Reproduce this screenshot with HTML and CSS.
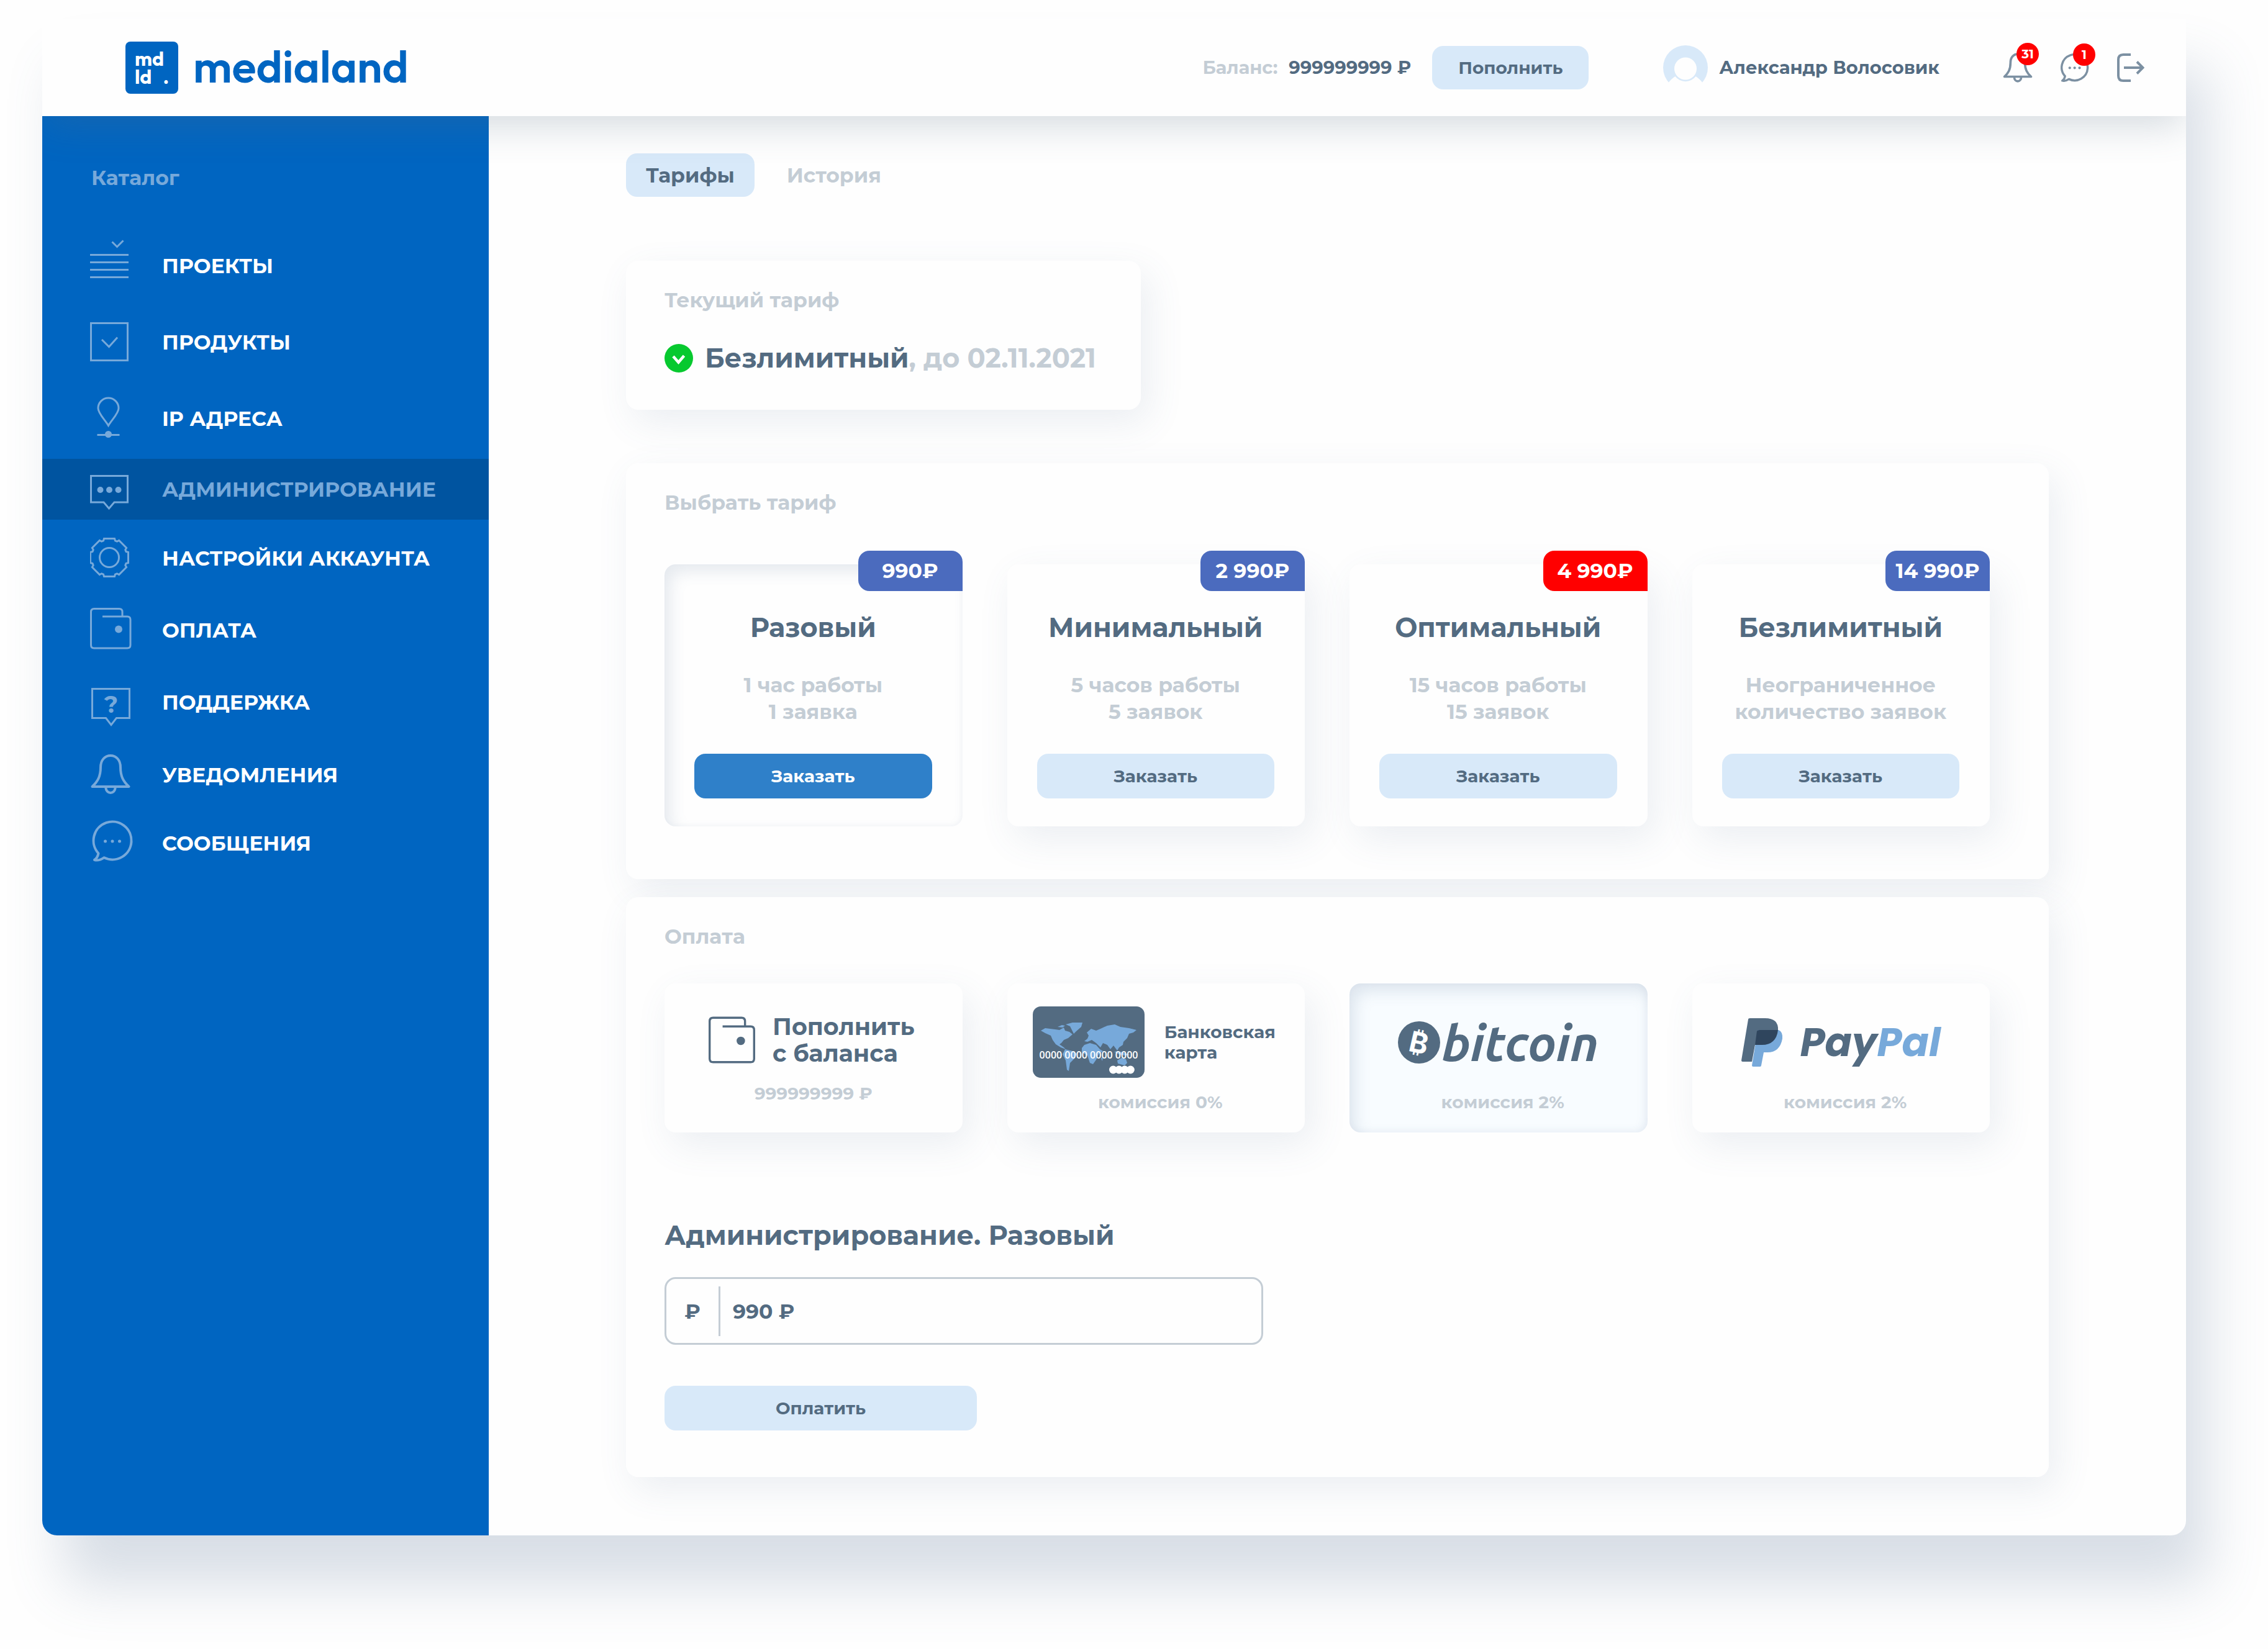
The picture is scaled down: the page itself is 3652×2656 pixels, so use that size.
FILE: index.html
```html
<!DOCTYPE html>
<html lang="ru">
<head>
<meta charset="utf-8">
<meta name="viewport" content="width=device-width, initial-scale=1">
<title>medialand — Тарифы</title>
<link rel="stylesheet" href="styles.css">
</head>
<body>
<div class="window">
  <header class="header">
    <a class="logo" href="#">
      <span class="logo__mark"><span class="logo__line">md</span><span class="logo__line"><span>ld</span><span>.</span></span></span>
      <span class="logo__name">medialand</span>
    </a>
    <div class="balance">
      <span class="balance__label">Баланс:</span>
      <span class="balance__sum">999999999 ₽</span>
      <button class="button button--small" type="button">Пополнить</button>
    </div>
    <a class="user" href="#">
      <svg class="user__avatar" viewBox="0 0 72 72" aria-hidden="true">
        <circle cx="36" cy="36" r="36" fill="#d8e9f9"/>
        <path d="M0 72L8 61Q13 54 19.500 50A20.700 20.700 0 0 0 52.500 50Q59 54 64 61L72 72Z" fill="#fefefe"/>
        <circle cx="36" cy="37.500" r="18" fill="#fefefe"/>
      </svg>
      <span>Александр Волосовик</span>
    </a>
    <div class="tools">
      <a class="tool" href="#" aria-label="Уведомления">
        <svg width="48" height="48" viewBox="0 8 66 66" fill="none" stroke="currentColor" stroke-width="5" stroke-linejoin="round"><path d="M3.500 61C12 53 17 45 17 30C17 18 24 11 33 11C42 11 49 18 49 30C49 45 54 53 62.500 61Z"/><path d="M25.500 63a7.500 8 0 0 0 15 0"/></svg>
        <span class="tool__count">31</span>
      </a>
      <a class="tool" href="#" aria-label="Сообщения">
        <svg width="46" height="46" viewBox="3 5 67 67" fill="none" stroke="currentColor" stroke-width="5" stroke-linejoin="round"><path d="M13.500 58.500A30.500 30.500 0 1 1 22.500 65.300Q14 71 7 69Q12 66 13.500 58.500Z"/><g fill="currentColor" stroke="none"><circle cx="24.500" cy="39" r="3"/><circle cx="36" cy="39" r="3"/><circle cx="47.500" cy="39" r="3"/></g></svg>
        <span class="tool__count">1</span>
      </a>
      <a class="tool" href="#" aria-label="Выйти">
        <svg width="44" height="46" viewBox="0 0 44 46" fill="none" stroke="currentColor" stroke-width="4"><path d="M22 2H10Q2 2 2 10V36Q2 44 10 44H22M11 23H41M32 13.500L41.500 23L32 32.500"/></svg>
      </a>
    </div>
  </header>

  <div class="body">
    <nav class="sidebar" aria-label="Каталог">
      <h2 class="sidebar__title">Каталог</h2>
      <ul class="menu menu--roomy">
        <li><a class="menu__link" href="#"><svg class="menu__icon" viewBox="0 0 70 84"><path d="M0 24.500H62M0 36.500H62M0 48.500H62M0 60.500H62M35.500 3.500L43.500 11.500L53.500 1.500"/></svg>ПРОЕКТЫ</a></li>
        <li><a class="menu__link" href="#"><svg class="menu__icon" viewBox="0 0 70 84"><path d="M1.500 11.500H60.500V71.500H1.500ZM19 38L30.500 49.500L44 34.500"/></svg>ПРОДУКТЫ</a></li>
        <li><a class="menu__link" href="#"><svg class="menu__icon" viewBox="0 0 70 84"><path d="M29.500 53.500C24 44 13 34 13 25.500A16.500 16.500 0 0 1 46 25.500C46 34 35 44 29.500 53.500ZM11.500 68.500H47.500"/><circle class="menu__dot" cx="29.500" cy="67.500" r="5.500"/></svg>IP АДРЕСА</a></li>
      </ul>
      <ul class="menu menu--current">
        <li><a class="menu__link" href="#" aria-current="page"><svg class="menu__icon" viewBox="0 0 70 84"><path d="M1.500 20.500H60.500V63H39L30.500 73L22 63H1.500Z"/><g class="menu__dot"><circle cx="16.500" cy="43" r="5"/><circle cx="31" cy="43" r="5"/><circle cx="45.500" cy="43" r="5"/></g></svg>АДМИНИСТРИРОВАНИЕ</a></li>
      </ul>
      <ul class="menu">
        <li><a class="menu__link" href="#"><svg class="menu__icon" viewBox="0 0 70 84"><g transform="translate(31 41)"><path d="M-9.500 -27L-8.500 -30.500L8.500 -30.500L9.500 -27L12.400 -25.800L15.600 -27.600L27.600 -15.600L25.800 -12.400L27 -9.500L30.500 -8.500L30.500 8.500L27 9.500L25.800 12.400L27.600 15.600L15.600 27.600L12.400 25.800L9.500 27L8.500 30.500L-8.500 30.500L-9.500 27L-12.400 25.800L-15.600 27.600L-27.600 15.600L-25.800 12.400L-27 9.500L-30.500 8.500L-30.500 -8.500L-27 -9.500L-25.800 -12.400L-27.600 -15.600L-15.600 -27.600L-12.400 -25.800Z"/><circle r="15.500"/></g></svg>НАСТРОЙКИ АККАУНТА</a></li>
        <li><a class="menu__link" href="#"><svg class="menu__icon" viewBox="0 0 70 84"><path d="M20 20H60Q65 20 65 25V66Q65 71 60 71H6.500Q1.500 71 1.500 66V12.500Q1.500 7.500 6.500 7.500H47Q52 7.500 52 12.500V20"/><circle class="menu__dot" cx="46" cy="40.500" r="6"/></svg>ОПЛАТА</a></li>
        <li><a class="menu__link" href="#"><svg class="menu__icon" viewBox="0 0 70 84"><path d="M3.500 20.500H63.500V67.500H42.500L34 78.500L25.500 67.500H3.500Z"/><text class="menu__glyph" x="34" y="59" text-anchor="middle">?</text></svg>ПОДДЕРЖКА</a></li>
      </ul>
      <ul class="menu menu--tight">
        <li><a class="menu__link" href="#"><svg class="menu__icon menu__icon--bold" viewBox="0 0 70 84"><path d="M3.500 61C12 53 17 45 17 30C17 18 24 11 33 11C42 11 49 18 49 30C49 45 54 53 62.500 61ZM25.500 63a7.500 8 0 0 0 15 0"/></svg>УВЕДОМЛЕНИЯ</a></li>
        <li><a class="menu__link" href="#"><svg class="menu__icon menu__icon--bold" viewBox="0 0 70 84"><path d="M13.500 58.500A30.500 30.500 0 1 1 22.500 65.300Q14 71 7 69Q12 66 13.500 58.500Z"/><g class="menu__dot"><circle cx="24.500" cy="39" r="2.500"/><circle cx="36" cy="39" r="2.500"/><circle cx="47.500" cy="39" r="2.500"/></g></svg>СООБЩЕНИЯ</a></li>
      </ul>
    </nav>

    <main class="content">
      <nav class="tabs" aria-label="Разделы">
        <a class="tab tab--active" href="#" aria-current="page">Тарифы</a>
        <a class="tab" href="#">История</a>
      </nav>

      <section class="current">
        <h2 class="caption">Текущий тариф</h2>
        <p class="current__plan">
          <svg class="current__check" viewBox="0 0 46 46" aria-hidden="true"><circle cx="23" cy="23" r="23" fill="#07c92f"/><path d="M14 20L22.500 29.500L31.500 19" fill="none" stroke="#fff" stroke-width="4.500"/></svg>
          <span><strong>Безлимитный</strong>, до 02.11.2021</span>
        </p>
      </section>

      <div class="panels">
        <section class="panel">
          <h2 class="caption">Выбрать тариф</h2>
          <div class="plans">
            <article class="plan plan--selected">
              <span class="plan__price">990₽</span>
              <h3 class="heading">Разовый</h3>
              <p class="plan__text">1 час работы<br>1 заявка</p>
              <button class="button button--primary" type="button">Заказать</button>
            </article>
            <article class="plan">
              <span class="plan__price">2 990₽</span>
              <h3 class="heading">Минимальный</h3>
              <p class="plan__text">5 часов работы<br>5 заявок</p>
              <button class="button" type="button">Заказать</button>
            </article>
            <article class="plan">
              <span class="plan__price plan__price--hot">4 990₽</span>
              <h3 class="heading">Оптимальный</h3>
              <p class="plan__text">15 часов работы<br>15 заявок</p>
              <button class="button" type="button">Заказать</button>
            </article>
            <article class="plan">
              <span class="plan__price">14 990₽</span>
              <h3 class="heading">Безлимитный</h3>
              <p class="plan__text">Неограниченное<br>количество заявок</p>
              <button class="button" type="button">Заказать</button>
            </article>
          </div>
        </section>

        <section class="panel panel--payment">
          <h2 class="caption">Оплата</h2>
          <form class="payment">
            <div class="methods">
              <label class="method method--balance">
                <input class="method__input" type="radio" name="method" value="balance">
                <span class="method__brand">
                  <svg width="75" height="76" viewBox="0 6 66.500 66.500" fill="none" stroke="#536b81" stroke-width="3"><path d="M20 20H60Q65 20 65 25V66Q65 71 60 71H6.500Q1.500 71 1.500 66V12.500Q1.500 7.500 6.500 7.500H47Q52 7.500 52 12.500V20"/><circle cx="46" cy="40.500" r="6" fill="#536b81" stroke="none"/></svg>
                  <span class="method__title">Пополнить<br>с баланса</span>
                </span>
                <span class="method__note">999999999 ₽</span>
              </label>
              <label class="method">
                <input class="method__input" type="radio" name="method" value="card">
                <span class="method__brand method__brand--card">
                  <svg width="180" height="115" viewBox="0 0 180 115" aria-hidden="true">
                    <rect width="180" height="115" rx="13" fill="#536b81"/>
                    <g fill="#77a9da">
                      <path d="M13 39L20 35L36 37L43 38L50 34L52 39L59 41L64 45L57 51L50 54L46 59L43 61L50 66L53 69L45 66L37 61L32 54L29 47L20 43Z"/>
                      <path d="M53 29L64 26L80 26L78 33L70 40L66 44L63 38L60 32Z"/>
                      <path d="M40 33L47 30L52 31L48 34Z"/>
                      <path d="M52 69L64 72L71 76L67 84L60 91L58 104L55 102L53 87L48 77Z"/>
                      <path d="M83 62L92 59L102 62L108 69L113 72L106 77L102 86L97 93L92 91L88 79L79 74L79 67Z"/>
                      <path d="M83 56L88 52L90 47L87 42L94 36L102 39L109 36L120 31L132 29L141 33L155 35L167 38L162 42L155 44L152 51L146 57L145 62L139 66L136 71L130 63L125 69L120 62L113 59L109 66L102 59L95 54L88 57Z"/>
                      <path d="M136 87L143 83L150 85L152 91L148 95L137 92Z"/>
                      <path d="M131 73L138 72L148 75L156 78L148 79L138 77ZM110 84L113 80L112 88Z"/>
                    </g>
                    <text class="card-number" x="90" y="84" text-anchor="middle">0000 0000 0000 0000</text>
                    <g fill="#fff"><circle cx="129.500" cy="102" r="6.500"/><circle cx="138.800" cy="102" r="6.500"/><circle cx="148" cy="102" r="6.500"/><circle cx="157.300" cy="102" r="6.500"/></g>
                  </svg>
                  <span class="method__name">Банковская<br>карта</span>
                </span>
                <span class="method__note">комиссия 0%</span>
              </label>
              <label class="method method--selected">
                <input class="method__input" type="radio" name="method" value="bitcoin" checked>
                <span class="method__brand method__brand--bitcoin">
                  <svg width="68" height="68" viewBox="0 0 68 68" aria-hidden="true"><circle cx="34" cy="34" r="34" fill="#536b81"/><text class="bitcoin-sign" x="34" y="51" text-anchor="middle" transform="rotate(13 34 34)">₿</text></svg>
                  <span>bitcoin</span>
                </span>
                <span class="method__note">комиссия 2%</span>
              </label>
              <label class="method">
                <input class="method__input" type="radio" name="method" value="paypal">
                <span class="method__brand method__brand--paypal">
                  <svg width="67" height="78" viewBox="0 0 67 78" aria-hidden="true"><path d="M11 2Q11 0 14 0H38Q60 0 59 19Q56 43 32 43H22L17 70H2Q0 70 0 68Z" fill="#536b81"/><path d="M26 21Q26 19 29 19H60Q67 22 66 33Q62 55 42 55H36L32 76Q32 78 30 78H19Q17 78 17 76Z" fill="#77a9da"/><path d="M25 21Q26 19 29 19H59Q56 43 33 43H22Z" fill="#2f455d"/></svg>
                  <span>Pay<span class="paypal-tail">Pal</span></span>
                </span>
                <span class="method__note">комиссия 2%</span>
              </label>
            </div>
            <label class="heading payment__heading" for="amount">Администрирование. Разовый</label>
            <div class="amount">
              <span class="amount__unit">₽</span>
              <input class="amount__input" id="amount" type="text" value="990 ₽">
            </div>
            <button class="button payment__submit" type="submit">Оплатить</button>
          </form>
        </section>
      </div>
    </main>
  </div>
</div>
</body>
</html>
```
FILE: styles.css
```css
*,
*::before {
  box-sizing: border-box;
}

:root {
  --ink: #536b81;
  --muted: #c4cdd5;
  --blue: #0065c1;
  --blue-soft: #77a9da;
  --sky: #d8e9f9;
  --paper: #fefefe;
  --card-shadow: 12px 20px 60px rgba(83, 110, 147, 0.11);
}

body {
  margin: 0;
  background: var(--paper);
  color: var(--ink);
  font: 700 33px/40px Montserrat, Inter, sans-serif;
}

h2,
h3,
p,
ul {
  margin: 0;
  padding: 0;
  font: inherit;
}

a {
  color: inherit;
  text-decoration: none;
}

svg {
  display: block;
  flex: none;
}

.window {
  margin: 30px 132px 183px 68px;
  border-radius: 0 0 24px 24px;
  background: var(--paper);
  box-shadow: 34px 80px 90px rgba(83, 110, 147, 0.22);
}

/* Header */

.header {
  position: relative;
  z-index: 1;
  display: flex;
  align-items: center;
  height: 157px;
  padding: 0 67px 0 134px;
  background: var(--paper);
  box-shadow: 0 20px 60px -4px rgba(83, 107, 129, 0.24);
  clip-path: inset(0 0 -120px 0);
  font-size: 29px;
}

.logo {
  display: flex;
  align-items: center;
  gap: 24px;
  margin-right: auto;
  color: var(--blue);
}

.logo__mark {
  display: flex;
  flex-direction: column;
  justify-content: center;
  width: 85px;
  height: 84px;
  padding: 0 15px;
  border-radius: 8px;
  background: var(--blue);
  color: #fff;
  font: 700 32px/29px Outfit, Poppins, sans-serif;
}

.logo__line {
  display: flex;
  justify-content: space-between;
}

.logo__name {
  padding-bottom: 4px;
  font: 600 72px/80px Outfit, Poppins, sans-serif;
}

.balance {
  display: flex;
  align-items: center;
  gap: 18px;
  margin-right: 120px;
}

.balance__label {
  color: var(--muted);
}

.balance__sum {
  margin-right: 16px;
}

.user {
  display: flex;
  align-items: center;
  gap: 18px;
  margin-right: 102px;
}

.user__avatar {
  width: 72px;
  height: 72px;
}

.tools {
  display: flex;
  align-items: center;
  gap: 45px;
  color: #7c90a2;
}

.tool {
  position: relative;
}

.tool__count {
  position: absolute;
  top: -16px;
  right: -10px;
  width: 36px;
  height: 36px;
  border-radius: 18px;
  background: #f00;
  color: #fff;
  font-size: 20px;
  line-height: 36px;
  text-align: center;
}

/* Buttons */

.button {
  display: block;
  width: 100%;
  height: 72px;
  padding: 0;
  border: 0;
  border-radius: 18px;
  background: var(--sky);
  color: var(--ink);
  font: 700 28px/40px Montserrat, Inter, sans-serif;
  cursor: pointer;
}

.button--small {
  width: 252px;
  height: 70px;
}

.button--primary {
  background: #2f80c9;
  color: #fff;
}

/* Layout */

.body {
  display: flex;
}

.sidebar {
  display: flex;
  flex: 0 0 719px;
  flex-direction: column;
  gap: 4px;
  padding-top: 79px;
  border-radius: 0 0 0 24px;
  background: var(--blue);
  color: #fff;
}

.sidebar__title {
  margin-bottom: 56px;
  padding-left: 79px;
  color: var(--blue-soft);
}

.menu {
  --row: 116px;
  list-style: none;
}

.menu--roomy {
  --row: 123px;
}

.menu--current {
  --row: 98px;
  background: #0054a0;
  color: var(--blue-soft);
}

.menu--tight {
  --row: 110px;
}

.menu__link {
  display: flex;
  align-items: center;
  gap: 46px;
  height: var(--row);
  padding-left: 77px;
}

.menu__icon {
  width: 70px;
  height: 84px;
  fill: none;
  stroke: var(--blue-soft);
  stroke-width: 3;
}

.menu__icon--bold {
  stroke-width: 4;
  stroke-linejoin: round;
}

.menu__dot,
.menu__glyph {
  fill: var(--blue-soft);
  stroke: none;
}

.menu__glyph {
  font-size: 38px;
}

.content {
  flex: 1;
  padding: 60px 221px 94px;
}

.tabs {
  display: flex;
  gap: 20px;
}

.tab {
  padding: 15px 32px;
  border-radius: 18px;
  color: var(--muted);
}

.tab--active {
  background: var(--sky);
  color: var(--ink);
}

.caption {
  color: var(--muted);
}

.heading {
  font-size: 43px;
  line-height: 50px;
}

.current {
  width: fit-content;
  margin-top: 103px;
  padding: 43px 72px 60px 62px;
  border-radius: 20px;
  background: var(--paper);
  box-shadow: var(--card-shadow);
}

.current__plan {
  display: flex;
  align-items: center;
  gap: 19px;
  margin-top: 51px;
  color: var(--muted);
  font-size: 43px;
  line-height: 46px;
}

.current__plan strong {
  color: var(--ink);
  font-weight: 700;
}

.current__check {
  width: 46px;
  height: 46px;
}

/* Panels: shadows sit under both panels so that neither shades the other */

.panels {
  display: flex;
  flex-direction: column;
  gap: 29px;
  margin-top: 86px;
  isolation: isolate;
}

.panel {
  position: relative;
  padding: 43px 95px 85px 62px;
  border-radius: 20px;
  background: var(--paper);
}

.panel::before {
  content: "";
  position: absolute;
  z-index: -1;
  inset: 0;
  border-radius: 20px;
  box-shadow: var(--card-shadow);
}

.panel--payment {
  padding-bottom: 75px;
}

.plans,
.methods {
  display: grid;
  grid-template-columns: repeat(4, 1fr);
  gap: 72px;
}

.plans {
  margin-top: 80px;
}

.plan {
  position: relative;
  padding: 77px 49px 45px 48px;
  border-radius: 18px;
  background: var(--paper);
  box-shadow: var(--card-shadow);
  text-align: center;
}

.plan--selected {
  box-shadow: inset 10px 12px 24px rgba(83, 110, 147, 0.14), inset -2px -2px 6px rgba(83, 110, 147, 0.04);
}

.plan__price {
  position: absolute;
  top: -22px;
  right: 0;
  width: 168px;
  border-radius: 18px 18px 0 18px;
  background: #4b6bbe;
  color: #fff;
  line-height: 65px;
}

.plan__price--hot {
  background: #f00;
}

.plan__text {
  margin: 46px 0;
  color: var(--muted);
  line-height: 43px;
}

.methods {
  margin-top: 56px;
}

.method {
  position: relative;
  display: flex;
  flex-direction: column;
  gap: 19px;
  height: 240px;
  padding-top: 37px;
  border-radius: 18px;
  background: var(--paper);
  box-shadow: var(--card-shadow);
  cursor: pointer;
}

.method--selected {
  background: #f8fcff;
  box-shadow: inset 8px 12px 26px rgba(83, 110, 147, 0.17), inset -4px -2px 12px rgba(83, 110, 147, 0.06);
}

.method__input {
  position: absolute;
  inset: 0;
  margin: 0;
  appearance: none;
}

.method__brand {
  display: flex;
  align-items: center;
  justify-content: center;
  gap: 28px;
  height: 115px;
}

.method--balance {
  gap: 12px;
}

.method--balance .method__brand {
  height: 108px;
  padding-right: 6px;
}

.method__brand--card {
  gap: 32px;
  padding-right: 6px;
}

.method__title {
  font-size: 38px;
  line-height: 43px;
}

.method__name {
  font-size: 28px;
  line-height: 33px;
}

.method__note {
  padding-left: 14px;
  color: var(--muted);
  font-size: 28px;
  text-align: center;
}

.method--balance .method__note {
  padding-left: 0;
}

.method__brand--bitcoin {
  gap: 2px;
  font: italic 700 80px/80px Ubuntu, "Open Sans", sans-serif;
}

.method__brand--paypal {
  font: italic 700 64px/80px Poppins, Montserrat, sans-serif;
}

.paypal-tail {
  color: var(--blue-soft);
}

.card-number {
  fill: #fff;
  font: 600 16px "Open Sans", sans-serif;
}

.bitcoin-sign {
  fill: #fff;
  font: 700 46px Inter, sans-serif;
}

.payment__heading {
  display: block;
  margin-top: 141px;
}

.amount {
  display: flex;
  align-items: center;
  max-width: 964px;
  height: 109px;
  margin-top: 42px;
  border: 3px solid var(--muted);
  border-radius: 18px;
}

.amount__unit {
  width: 87px;
  border-right: 3px solid var(--muted);
  line-height: 80px;
  text-align: center;
}

.amount__input {
  flex: 1;
  min-width: 0;
  padding: 0 20px;
  border: 0;
  background: none;
  color: inherit;
  font: inherit;
}

.payment__submit {
  width: 503px;
  margin-top: 66px;
}
```
